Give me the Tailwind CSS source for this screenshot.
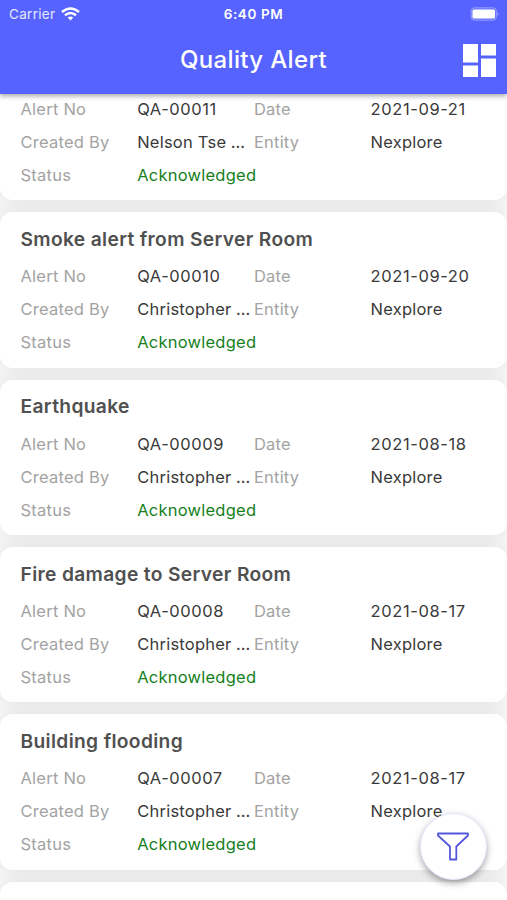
<!DOCTYPE html>
<html lang="en">
<head>
<meta charset="utf-8">
<title>Quality Alert</title>
<script src="https://cdn.jsdelivr.net/npm/@tailwindcss/browser@4"></script>
</head>
<body class="h-[900px] w-[507px] overflow-hidden bg-[#f9f9f9] font-['Inter','Liberation_Sans',sans-serif]">
<div class="relative flex h-[900px] w-[507px] flex-col overflow-hidden">
  <header class="relative z-10 h-[94px] shrink-0 bg-[#5663ff] text-white shadow-[0_2px_5px_rgba(0,0,0,0.35)]">
    <div class="grid h-[27px] grid-cols-3 items-center px-[9px] text-[13px]">
      <div class="flex items-center gap-[6px] pt-px text-[13.500px] tracking-[0.300px] text-white/85"><span>Carrier</span>
        <svg class="-mt-px h-[14px] w-[19px]" viewBox="0 0 19 14" fill="none" stroke="white" stroke-width="2.5"><path d="M1 5Q9.500-2 18 5"/><path d="M4 8.300Q9.500 3.700 15 8.300"/><path d="M6.700 10.500Q9.500 8.500 12.300 10.500L9.500 13.500Z" fill="white" stroke="none"/></svg>
      </div>
      <div class="pt-px text-center text-[13.500px] font-semibold tracking-[0.600px]">6:40 PM</div>
      <svg class="-mr-px h-[14px] w-[29px] justify-self-end" viewBox="0 0 29 14"><rect x="1" y="0.700" width="25.500" height="12.600" rx="3.500" fill="white" fill-opacity=".12" stroke="white" stroke-opacity=".3"/><rect x="2.500" y="2.500" width="22.500" height="9" rx="1.500" fill="white"/><path d="M27.500 5q2 2 0 4z" fill="white" fill-opacity=".5"/></svg>
    </div>
    <div class="grid h-[66px] grid-cols-[60px_1fr_60px] items-center">
      <span></span>
      <h1 class="text-center text-[24px] font-medium tracking-[0.350px]">Quality Alert</h1>
      <svg class="mr-[11px] h-[33px] w-[33px] justify-self-end" viewBox="0 0 33 33" fill="white"><path d="M0 0h15v18.500H0zM18 0h15v11.500H18zM0 21.500h15V33H0zM18 14.500h15V33H18z"/></svg>
    </div>
  </header>
  <main id="alerts" class="-mt-[49.200px] flex flex-col gap-[12px]"></main>
  <button aria-label="Filter" class="absolute top-[813px] left-[420px] z-20 flex h-[67px] w-[67px] items-center justify-center rounded-full border border-[#e8e7ff] bg-white pr-[2px] shadow-[0_3px_7px_rgba(0,0,0,0.35)]">
    <svg class="h-[29px] w-[32px]" viewBox="0 0 32 29" fill="none" stroke="#5558dc" stroke-width="1.800" stroke-linejoin="round"><path d="M1 1.500H31V3.500L19.300 14.500V27.500H13V14.500L1 3.500Z"/></svg>
  </button>
</div>
<script>
const alerts = [
  ['Fire alert', 'QA-00011', '2021-09-21', 'Nelson Tse'],
  ['Smoke alert from Server Room', 'QA-00010', '2021-09-20', 'Christopher'],
  ['Earthquake', 'QA-00009', '2021-08-18', 'Christopher'],
  ['Fire damage to Server Room', 'QA-00008', '2021-08-17', 'Christopher'],
  ['Building flooding', 'QA-00007', '2021-08-17', 'Christopher'],
  ['', '', '', '']
];
document.getElementById('alerts').innerHTML = alerts.map(([title, no, date, by]) => `
  <article class="relative h-[155.400px] shrink-0 rounded-[13px] bg-white px-[20.500px] pt-[11.700px]">
    <div class="absolute inset-0 -z-10 rounded-[13px] shadow-[0_0_22px_rgba(0,0,0,0.1)]"></div>
    ${title ? `<h2 class="h-[36.300px] text-[19.200px] leading-[30px] font-semibold tracking-[0.350px] text-[#505050]">${title}</h2>
    <dl class="grid grid-cols-[116.700px_116.700px_116.700px_1fr] text-[16.500px] leading-[33px] tracking-[0.230px] whitespace-nowrap text-[#3a3a3a]">
      <dt class="text-[#a3a3a3]">Alert No</dt><dd class="tracking-[0.550px]">${no}</dd><dt class="text-[#a3a3a3]">Date</dt><dd class="tracking-[0.600px]">${date}</dd>
      <dt class="text-[#a3a3a3]">Created By</dt><dd>${by}<span class="tracking-[-0.100px]"> ...</span></dd><dt class="text-[#a3a3a3]">Entity</dt><dd>Nexplore</dd>
      <dt class="text-[#a3a3a3]">Status</dt><dd class="text-[#16801d]">Acknowledged</dd>
    </dl>` : ''}
  </article>`).join('');
</script>
</body>
</html>
